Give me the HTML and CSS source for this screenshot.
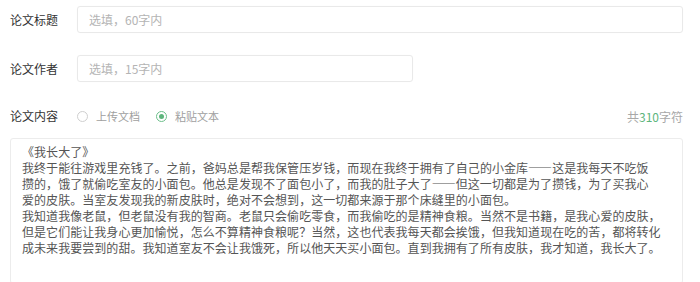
FILE: index.html
```html
<!DOCTYPE html>
<html lang="zh-CN">
<head>
<meta charset="utf-8">
<title>论文信息</title>
<link rel="stylesheet" href="styles.css">
</head>
<body>
<form class="form">
  <div class="row">
    <label class="label">论文标题</label>
    <div class="input input-wide"><span class="placeholder">选填，60字内</span></div>
  </div>
  <div class="row row-author">
    <label class="label">论文作者</label>
    <div class="input input-narrow"><span class="placeholder">选填，15字内</span></div>
  </div>
  <div class="row row-content">
    <label class="label">论文内容</label>
    <div class="radios">
      <span class="radio"><span class="circle"></span><span class="radio-text">上传文档</span></span>
      <span class="radio checked"><span class="circle"></span><span class="radio-text">粘贴文本</span></span>
    </div>
    <div class="count">共<span class="num">310</span>字符</div>
  </div>
  <div class="textarea">
    <div class="line">《我长大了》</div>
    <div class="line">我终于能往游戏里充钱了。之前，爸妈总是帮我保管压岁钱，而现在我终于拥有了自己的小金库——这是我每天不吃饭</div>
    <div class="line">攒的，饿了就偷吃室友的小面包。他总是发现不了面包小了，而我的肚子大了——但这一切都是为了攒钱，为了买我心</div>
    <div class="line">爱的皮肤。当室友发现我的新皮肤时，绝对不会想到，这一切都来源于那个床缝里的小面包。</div>
    <div class="line">我知道我像老鼠，但老鼠没有我的智商。老鼠只会偷吃零食，而我偷吃的是精神食粮。当然不是书籍，是我心爱的皮肤，</div>
    <div class="line">但是它们能让我身心更加愉悦，怎么不算精神食粮呢？当然，这也代表我每天都会挨饿，但我知道现在吃的苦，都将转化</div>
    <div class="line">成未来我要尝到的甜。我知道室友不会让我饿死，所以他天天买小面包。直到我拥有了所有皮肤，我才知道，我长大了。</div>
  </div>
</form>
</body>
</html>
```

FILE: styles.css
```css
html, body {
  margin: 0;
  padding: 0;
  background: #ffffff;
  overflow: hidden;
}

body {
  font-family: "Noto Sans CJK SC", "Noto Sans", sans-serif;
  color: #333333;
}

.form {
  padding: 6px 17px 0 10px;
}

.row {
  display: flex;
  align-items: center;
}

.label {
  width: 67px;
  flex: none;
  font-size: 12px;
  color: #333333;
  line-height: 16px;
}

.input {
  box-sizing: border-box;
  height: 27px;
  border: 1px solid #e9e9e9;
  border-radius: 3px;
  padding: 0 11px;
  display: flex;
  align-items: center;
  box-shadow: 0 0 1px rgba(0, 0, 0, 0.04);
}

.input-wide {
  flex: 1;
}

.input-narrow {
  width: 336px;
}

.placeholder {
  font-size: 12px;
  color: #b4b4b4;
}

.row-author {
  margin-top: 22px;
}

.row-content {
  margin-top: 24px;
  height: 20px;
}

.radios {
  display: flex;
  align-items: center;
  gap: 16px;
  flex: 1;
}

.radio {
  display: flex;
  align-items: center;
  gap: 8px;
}

.circle {
  box-sizing: border-box;
  width: 11px;
  height: 11px;
  border: 1px solid #cfcfcf;
  border-radius: 50%;
  display: flex;
  align-items: center;
  justify-content: center;
}

.checked .circle {
  border-color: #6cbf8a;
}

.checked .circle::after {
  content: "";
  width: 5px;
  height: 5px;
  border-radius: 50%;
  background: #5db57c;
}

.radio-text {
  font-size: 11px;
  color: #a0a0a0;
}

.count {
  font-size: 12px;
  color: #a8a8a8;
}

.num {
  color: #5db57c;
}

.textarea {
  box-sizing: border-box;
  margin-top: 12px;
  height: 146px;
  border: 1px solid #ececec;
  border-radius: 3px;
  padding: 5px 11px;
  font-size: 12px;
  line-height: 16px;
  color: #555555;
  letter-spacing: 0.05px;
}

.line {
  white-space: nowrap;
}
```
